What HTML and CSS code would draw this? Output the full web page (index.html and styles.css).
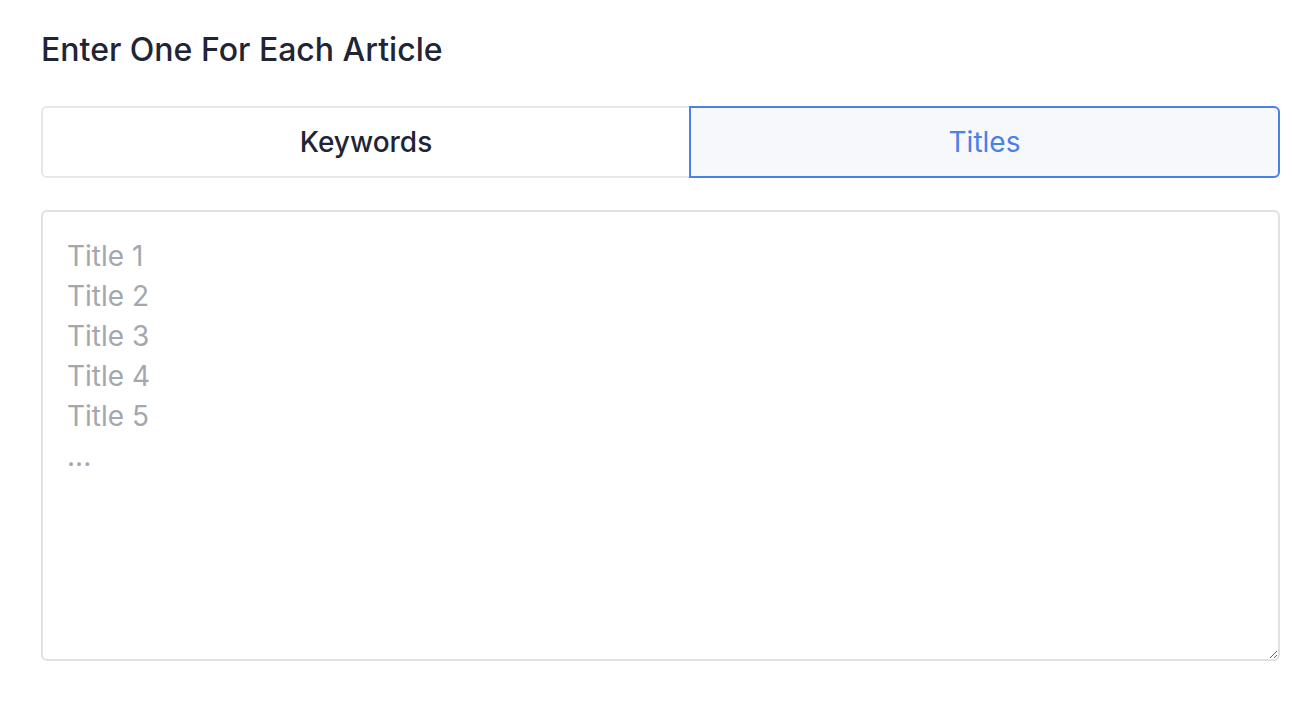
FILE: index.html
```html
<!DOCTYPE html>
<html>

<head>
    <meta charset="utf-8">
    <title>Articles</title>
    <link rel="stylesheet" href="styles.css">
</head>

<body>
    <div class="panel">
        <h2 class="panel-title">Enter One For Each Article</h2>
        <div class="tabs">
            <div class="tab">Keywords</div>
            <div class="tab tab-active">Titles</div>
        </div>
        <textarea class="entries" placeholder="Title 1
Title 2
Title 3
Title 4
Title 5
..."></textarea>
    </div>
</body>

</html>
```

FILE: styles.css
```css
* {
    box-sizing: border-box;
}

body {
    margin: 0;
    background-color: #ffffff;
    font-family: Inter, 'Noto Sans', sans-serif;
}

.panel {
    padding: 30px 36px 0 41px;
}

.panel-title {
    margin: 0 0 36px 0;
    font-size: 32px;
    font-weight: 500;
    line-height: 40px;
    color: #1f2535;
}

.tabs {
    display: flex;
    height: 72px;
    border: 2px solid #e6e7e9;
    border-radius: 6px;
    margin-bottom: 32px;
}

.tab {
    flex: 1;
    display: flex;
    align-items: center;
    justify-content: center;
    font-size: 28px;
    font-weight: 500;
    color: #1f2535;
    cursor: pointer;
}

.tab-active {
    margin: -2px -2px -2px 0;
    border: 2px solid #4a80e8;
    border-radius: 0 6px 6px 0;
    background-color: #f7f8fc;
    color: #4a80e8;
    font-weight: 400;
    flex: 0 0 591px;
}

.entries {
    display: block;
    width: 100%;
    height: 451px;
    padding: 24px 24px;
    border: 2px solid #e1e1e3;
    border-radius: 6px;
    font-family: Inter, 'Noto Sans', sans-serif;
    font-size: 28px;
    line-height: 40px;
    color: #1f2535;
    outline: none;
}

.entries::placeholder {
    color: #a4a7ae;
}
```
